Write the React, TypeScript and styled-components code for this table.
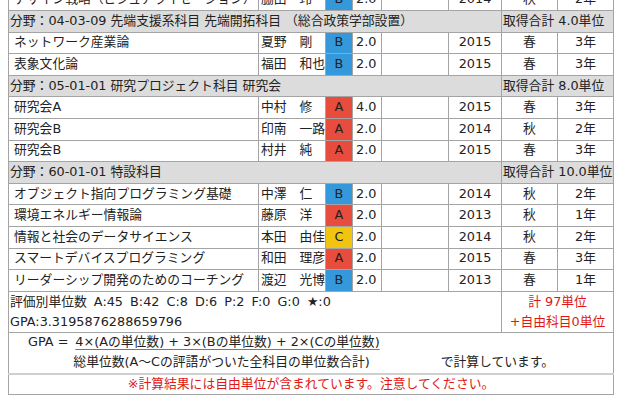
import React from "react";
import styled, { createGlobalStyle, css } from "styled-components";

const GlobalStyle = createGlobalStyle`
  html, body {
    margin: 0;
    padding: 0;
    background: #ffffff;
  }
  body {
    font-family: "DejaVu Sans", "Noto Sans CJK JP", "Noto Sans", sans-serif;
    color: #222222;
  }
`;

type Grade = "A" | "B" | "C";

type Course = {
  kind: "course";
  name: string;
  teacher: string;
  grade: Grade;
  credits: string;
  year: string;
  term: string;
  level: string;
};

type Section = {
  kind: "section";
  title: string;
  total: string;
};

type Row = Course | Section;

const rows: Row[] = [
  { kind: "course", name: "デザイン戦略（ビジュアライゼーション）", teacher: "脇田　玲", grade: "B", credits: "2.0", year: "2014", term: "秋", level: "2年" },
  { kind: "section", title: "分野：04-03-09 先端支援系科目 先端開拓科目 （総合政策学部設置）", total: "取得合計 4.0単位" },
  { kind: "course", name: "ネットワーク産業論", teacher: "夏野　剛", grade: "B", credits: "2.0", year: "2015", term: "春", level: "3年" },
  { kind: "course", name: "表象文化論", teacher: "福田　和也", grade: "B", credits: "2.0", year: "2015", term: "春", level: "3年" },
  { kind: "section", title: "分野：05-01-01 研究プロジェクト科目 研究会", total: "取得合計 8.0単位" },
  { kind: "course", name: "研究会A", teacher: "中村　修", grade: "A", credits: "4.0", year: "2015", term: "春", level: "3年" },
  { kind: "course", name: "研究会B", teacher: "印南　一路", grade: "A", credits: "2.0", year: "2014", term: "秋", level: "2年" },
  { kind: "course", name: "研究会B", teacher: "村井　純", grade: "A", credits: "2.0", year: "2015", term: "春", level: "3年" },
  { kind: "section", title: "分野：60-01-01 特設科目", total: "取得合計 10.0単位" },
  { kind: "course", name: "オブジェクト指向プログラミング基礎", teacher: "中澤　仁", grade: "B", credits: "2.0", year: "2014", term: "秋", level: "2年" },
  { kind: "course", name: "環境エネルギー情報論", teacher: "藤原　洋", grade: "A", credits: "2.0", year: "2013", term: "秋", level: "1年" },
  { kind: "course", name: "情報と社会のデータサイエンス", teacher: "本田　由佳", grade: "C", credits: "2.0", year: "2014", term: "秋", level: "2年" },
  { kind: "course", name: "スマートデバイスプログラミング", teacher: "和田　理彦", grade: "A", credits: "2.0", year: "2015", term: "春", level: "3年" },
  { kind: "course", name: "リーダーシップ開発のためのコーチング", teacher: "渡辺　光博", grade: "B", credits: "2.0", year: "2013", term: "春", level: "1年" },
];

const gradeColors: Record<Grade, string> = {
  A: "#e74c3c",
  B: "#3498db",
  C: "#f1c40f",
};

const Page = styled.div`
  margin-top: -11.6px;
  padding-left: 8px;
`;

const Table = styled.table`
  width: 605px;
  table-layout: fixed;
  border-collapse: collapse;
  border: 1px solid #a4a4a4;
  font-size: 12.8px;
  line-height: 1;
`;

const Col = styled.col<{ $w: number }>`
  width: ${(p) => p.$w}px;
`;

const Tr = styled.tr<{ $h?: number; $section?: boolean }>`
  height: ${(p) => p.$h ?? 21.6}px;
  background: ${(p) => (p.$section ? "#dcdcdc" : "#ffffff")};
`;

const Td = styled.td<{ $align?: "left" | "center" | "right"; $pad?: number }>`
  border: 1px solid #a4a4a4;
  padding: 0 0 0 ${(p) => p.$pad ?? 0}px;
  text-align: ${(p) => p.$align ?? "left"};
  vertical-align: middle;
  white-space: nowrap;
  overflow: hidden;
`;

const GradeTd = styled(Td)<{ $grade: Grade }>`
  background: ${(p) => gradeColors[p.$grade]};
  text-align: center;
`;

const SectionTitle = styled(Td)`
  padding-left: 1px;
`;

const SectionTotal = styled(Td)`
  padding-left: 1px;
  overflow: visible;
`;

const SummaryCell = styled(Td)`
  padding-left: 1px;
  line-height: 20px;
`;

const RedText = css`
  color: #e01818;
`;

const TotalCell = styled(Td)`
  ${RedText};
  text-align: center;
  line-height: 20px;
`;

const Line = styled.div<{ $spaced?: boolean }>`
  word-spacing: ${(p) => (p.$spaced ? "3px" : "normal")};
`;

const FormulaCell = styled(Td)`
  padding: 0 0 0 19px;
  border-bottom: 2px solid #cfcfcf;
`;

const Formula = styled.div`
  display: grid;
  grid-template-columns: auto auto auto;
  grid-template-rows: 20px 20px;
  align-items: center;
  justify-content: start;
`;

const FormulaLead = styled.span`
  grid-column: 1;
  grid-row: 1;
  padding-right: 5px;
`;

const Numerator = styled.span`
  grid-column: 2;
  grid-row: 1;
  text-decoration: underline;
  text-decoration-color: #777;
  text-underline-offset: 3px;
  padding-left: 2px;
  white-space: pre;
`;

const Denominator = styled.span`
  grid-column: 2;
  grid-row: 2;
`;

const FormulaTail = styled.span`
  grid-column: 3;
  grid-row: 2;
  padding-left: 61px;
`;

const WarningCell = styled(Td)`
  ${RedText};
  text-align: center;
`;

const colWidths = [250, 67, 27, 29, 67, 53, 56, 56];

export default function App() {
  return (
    <>
      <GlobalStyle />
      <Page>
        <Table>
          <colgroup>
            {colWidths.map((w, i) => (
              <Col key={i} $w={w} />
            ))}
          </colgroup>
          <tbody>
            {rows.map((r, i) =>
              r.kind === "section" ? (
                <Tr key={i} $section>
                  <SectionTitle colSpan={6}>{r.title}</SectionTitle>
                  <SectionTotal colSpan={2}>{r.total}</SectionTotal>
                </Tr>
              ) : (
                <Tr key={i}>
                  <Td $pad={5}>{r.name}</Td>
                  <Td $pad={2}>{r.teacher}</Td>
                  <GradeTd $grade={r.grade}>{r.grade}</GradeTd>
                  <Td $pad={3}>{r.credits}</Td>
                  <Td />
                  <Td $align="center">{r.year}</Td>
                  <Td $align="center">{r.term}</Td>
                  <Td $align="center">{r.level}</Td>
                </Tr>
              )
            )}
            <Tr $h={40}>
              <SummaryCell colSpan={6}>
                <Line $spaced>評価別単位数 A:45 B:42 C:8 D:6 P:2 F:0 G:0 ★:0</Line>
                <Line>GPA:3.3195876288659796</Line>
              </SummaryCell>
              <TotalCell colSpan={2}>
                <Line>計 97単位</Line>
                <Line>+自由科目0単位</Line>
              </TotalCell>
            </Tr>
            <Tr $h={41}>
              <FormulaCell colSpan={8}>
                <Formula>
                  <FormulaLead>GPA =</FormulaLead>
                  <Numerator>4×(Aの単位数) + 3×(Bの単位数) + 2×(Cの単位数)</Numerator>
                  <Denominator>総単位数(A〜Cの評語がついた全科目の単位数合計)</Denominator>
                  <FormulaTail>で計算しています。</FormulaTail>
                </Formula>
              </FormulaCell>
            </Tr>
            <Tr $h={21}>
              <WarningCell colSpan={8}>※計算結果には自由単位が含まれています。注意してください。</WarningCell>
            </Tr>
          </tbody>
        </Table>
      </Page>
    </>
  );
}
